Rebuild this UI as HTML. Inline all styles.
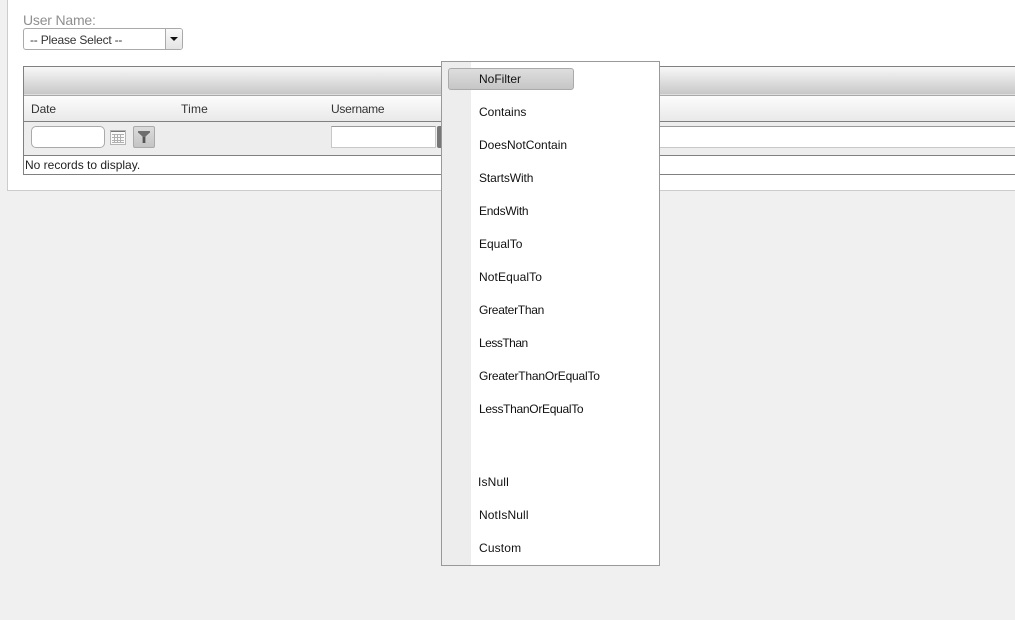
<!DOCTYPE html>
<html><head><meta charset="utf-8">
<style>
html,body{margin:0;padding:0;width:1015px;height:620px;overflow:hidden;background:#f0f0f0}
*{box-sizing:border-box}
div{position:absolute}
.t{font:12px/14px "Liberation Sans",sans-serif;color:#111;white-space:nowrap}
.m{left:479px}
</style></head><body>
<div style="left:7px;top:-1px;width:1010px;height:192px;background:#fff;border:1px solid #ccc"></div>
<div class="t" style="left:23px;top:12px;font-size:14px;line-height:16px;color:#8f8f8f;letter-spacing:-.2px">User Name:</div>
<div style="left:23px;top:28px;width:160px;height:22px;background:#fff;border:1px solid #aaa;border-radius:3px"></div>
<div style="left:165px;top:29px;width:17px;height:20px;background:linear-gradient(#fafafa,#e4e4e4);border-left:1px solid #aaa;border-radius:0 2px 2px 0"></div>
<div style="left:170px;top:37px;width:0;height:0;border:4px solid transparent;border-top:4px solid #111;border-bottom:0"></div>
<div class="t" style="left:30px;top:33px;color:#333;letter-spacing:-.2px">-- Please Select --</div>

<div style="left:23px;top:66px;width:1000px;height:109px;background:#fff;border:1px solid #808080"></div>
<div style="left:24px;top:67px;width:991px;height:28px;background:linear-gradient(#f8f8f8,#c8c8c8 96%,#f0f0f0)"></div>
<div style="left:24px;top:95px;width:991px;height:1px;background:#a8a8a8"></div>
<div style="left:24px;top:96px;width:991px;height:25px;background:linear-gradient(#fcfcfc,#e9e9e9)"></div>
<div style="left:24px;top:121px;width:991px;height:1px;background:#808080"></div>
<div style="left:24px;top:122px;width:991px;height:33px;background:#ededed"></div>
<div style="left:24px;top:155px;width:991px;height:1px;background:#808080"></div>
<div style="left:24px;top:174px;width:991px;height:1px;background:#808080"></div>
<div style="left:500px;top:126px;width:520px;height:22px;background:#fff;border:1px solid #c8c8c8;border-top-color:#999"></div>

<div class="t" style="left:31px;top:102px;color:#333;letter-spacing:-.1px">Date</div>
<div class="t" style="left:181px;top:102px;color:#333;letter-spacing:.2px">Time</div>
<div class="t" style="left:331px;top:102px;color:#333;letter-spacing:-.25px">Username</div>

<div style="left:31px;top:126px;width:74px;height:22px;background:#fff;border:1px solid #aaa;border-radius:5px"></div>
<svg style="position:absolute;left:110px;top:130px" width="16" height="15" viewBox="0 0 16 15"><rect x=".5" y=".5" width="15" height="14" fill="#fafafa" stroke="#b4b4b4"/><rect x="1" y="1" width="14" height="1" fill="#777"/><path d="M4.500 4v9M7.500 4v9M10.500 4v9M2 4.500h12M2 7.500h12M2 10.500h12M2 12.500h12" stroke="#b0b0b0" fill="none"/></svg>
<div style="left:133px;top:126px;width:22px;height:22px;background:linear-gradient(#dcdcdc,#c4c4c4);border:1px solid #aaa;border-radius:2px"></div>
<svg style="position:absolute;left:138px;top:131px" width="12" height="13" viewBox="0 0 12 13"><path d="M0 0h12v1.500L7.500 5.500V12h-3V5.500L0 1.500z" fill="#6e6e6e"/><rect x="5" y="6" width="2" height="6" fill="#555"/></svg>

<div style="left:331px;top:126px;width:105px;height:22px;background:#fff;border:1px solid #c8c8c8;border-top-color:#999"></div>
<div style="left:437px;top:126px;width:6px;height:22px;background:#777;border-radius:2px 0 0 2px"></div>

<div class="t" style="left:25px;top:158px;color:#222">No records to display.</div>

<div style="left:441px;top:61px;width:219px;height:505px;background:#fff;border:1px solid #999"></div>
<div style="left:442px;top:62px;width:29px;height:503px;background:#ededed"></div>
<div style="left:448px;top:68px;width:126px;height:22px;background:linear-gradient(#dedede,#c6c6c6);border:1px solid #aaa;border-radius:3px"></div>
<div class="t m" style="top:72px">NoFilter</div>
<div class="t m" style="top:105px">Contains</div>
<div class="t m" style="top:138px">DoesNotContain</div>
<div class="t m" style="top:171px;letter-spacing:-.1px">StartsWith</div>
<div class="t m" style="top:204px;letter-spacing:-.25px">EndsWith</div>
<div class="t m" style="top:237px">EqualTo</div>
<div class="t m" style="top:270px;letter-spacing:.1px">NotEqualTo</div>
<div class="t m" style="top:303px;letter-spacing:-.27px">GreaterThan</div>
<div class="t m" style="top:336px;letter-spacing:-.5px">LessThan</div>
<div class="t m" style="top:369px;letter-spacing:-.2px">GreaterThanOrEqualTo</div>
<div class="t m" style="top:402px;letter-spacing:-.3px">LessThanOrEqualTo</div>
<div class="t m" style="top:475px;left:478px;letter-spacing:.15px">IsNull</div>
<div class="t m" style="top:508px;letter-spacing:.1px">NotIsNull</div>
<div class="t m" style="top:541px;letter-spacing:.15px">Custom</div>
</body></html>
